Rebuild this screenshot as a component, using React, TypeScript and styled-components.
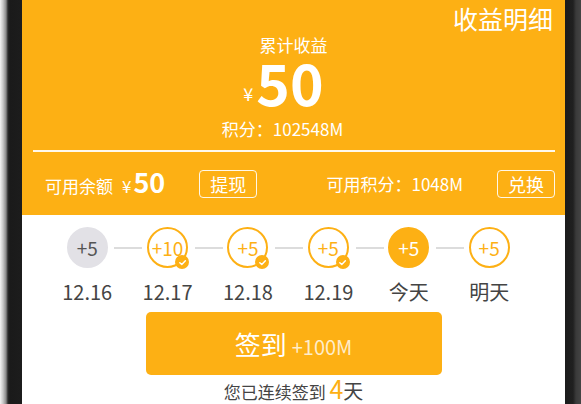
import styled, { createGlobalStyle } from "styled-components"

const ORANGE = "#fdb014"

const days = [
  { value: "+5", label: "12.16", kind: "missed" },
  { value: "+10", label: "12.17", kind: "done" },
  { value: "+5", label: "12.18", kind: "done" },
  { value: "+5", label: "12.19", kind: "done" },
  { value: "+5", label: "今天", kind: "today" },
  { value: "+5", label: "明天", kind: "next" },
] as const

type Kind = (typeof days)[number]["kind"]

const App = () => {
  return (
    <>
      <Global />
      <Frame>
        <LeftBezel />
        <Screen>
          <Header>
            <Title>收益明细</Title>
            <Summary>
              <SubLabel>累计收益</SubLabel>
              <Amount>
                <Yen>¥</Yen>
                <Big>50</Big>
              </Amount>
              <Points>积分：102548M</Points>
            </Summary>
            <Divider />
            <BalanceRow>
              <Group>
                <BalanceText>
                  可用余额<small>¥</small>
                  <strong>50</strong>
                </BalanceText>
                <OutlineButton>提现</OutlineButton>
              </Group>
              <Group>
                <BalanceText>可用积分：1048M</BalanceText>
                <OutlineButton>兑换</OutlineButton>
              </Group>
            </BalanceRow>
          </Header>
          <Body>
            <Steps>
              {days.map((d, i) => (
                <Step key={d.label} $first={i === 0}>
                  <Circle $kind={d.kind}>
                    {d.value}
                    {d.kind === "done" && (
                      <Badge>
                        <svg width="9" height="9" viewBox="0 0 10 10">
                          <polyline
                            points="2,5.2 4.2,7.3 8.2,3"
                            fill="none"
                            stroke="#fff"
                            strokeWidth="1.6"
                            strokeLinecap="round"
                            strokeLinejoin="round"
                          />
                        </svg>
                      </Badge>
                    )}
                  </Circle>
                  <DayLabel>{d.label}</DayLabel>
                </Step>
              ))}
            </Steps>
            <SignButton>
              签到<Bonus>+100M</Bonus>
            </SignButton>
            <Streak>
              您已连续签到 <Count>4</Count>
              <Unit>天</Unit>
            </Streak>
          </Body>
        </Screen>
        <RightBezel />
      </Frame>
    </>
  )
}

export default App

const Global = createGlobalStyle`
  html, body {
    margin: 0;
    padding: 0;
    background: #fff;
    overflow: hidden;
  }
  body {
    font-family: "Noto Sans CJK SC", "Noto Sans", sans-serif;
  }
`

const Frame = styled.div`
  display: flex;
  width: 581px;
  height: 404px;
  overflow: hidden;
`

const LeftBezel = styled.div`
  width: 22px;
  flex-shrink: 0;
  background: linear-gradient(
    to right,
    #f4f4f4 0px,
    #c8c8c8 3px,
    #8a8a8a 6px,
    #2a2a2a 8px,
    #1a1a1a 10px,
    #1c1c1c 22px
  );
`

const RightBezel = styled.div`
  width: 16px;
  flex-shrink: 0;
  background: linear-gradient(
    to right,
    #1b1b1b 0px,
    #202020 8px,
    #3a3a3a 11px,
    #444 16px
  );
`

const Screen = styled.div`
  flex: 1;
  display: flex;
  flex-direction: column;
  background: #fff;
`

const Header = styled.div`
  height: 215px;
  flex-shrink: 0;
  background: ${ORANGE};
  color: #fff;
  display: flex;
  flex-direction: column;
`

const Title = styled.div`
  align-self: flex-end;
  padding: 6px 12px 0 0;
  font-size: 25px;
  line-height: 25px;
`

const Summary = styled.div`
  display: flex;
  flex-direction: column;
  align-items: center;
  margin-top: 4px;
`

const SubLabel = styled.div`
  font-size: 17px;
  line-height: 20px;
`

const Amount = styled.div`
  line-height: 54px;
  height: 54px;
  margin-top: -1px;
  padding-right: 20px;
`

const Yen = styled.span`
  font-size: 18px;
  vertical-align: 5px;
  margin-right: 3px;
`

const Big = styled.span`
  font-size: 57px;
  font-weight: 700;
`

const Points = styled.div`
  font-size: 17px;
  line-height: 20px;
  margin-top: 11px;
  padding-right: 22px;
`

const Divider = styled.div`
  height: 2px;
  margin: 11px 10px 0 11px;
  background: rgba(255, 255, 255, 0.92);
`

const BalanceRow = styled.div`
  flex: 1;
  display: flex;
  align-items: center;
  justify-content: space-between;
  padding: 0 10px 0 23px;
`

const Group = styled.div`
  display: flex;
  align-items: center;
  gap: 34px;
`

const BalanceText = styled.div`
  font-size: 17px;
  line-height: 20px;

  small {
    font-size: 17px;
    margin: 0 2px 0 9px;
  }

  strong {
    font-size: 27px;
    font-weight: 700;
  }
`

const OutlineButton = styled.div`
  width: 58px;
  height: 28px;
  box-sizing: border-box;
  border: 1.5px solid rgba(255, 255, 255, 0.9);
  border-radius: 4px;
  display: flex;
  align-items: center;
  justify-content: center;
  font-size: 18px;
`

const Body = styled.div`
  flex: 1;
  display: flex;
  flex-direction: column;
`

const Steps = styled.div`
  display: flex;
  padding: 12px 0 0 25px;
`

const Step = styled.div<{ $first: boolean }>`
  position: relative;
  width: 80.4px;
  display: flex;
  flex-direction: column;
  align-items: center;

  &::before {
    content: "";
    display: ${(p) => (p.$first ? "none" : "block")};
    position: absolute;
    top: 19.5px;
    left: -13px;
    width: 28px;
    height: 2px;
    background: #dcdcdc;
  }
`

const Circle = styled.div<{ $kind: Kind }>`
  position: relative;
  width: 41px;
  height: 41px;
  box-sizing: border-box;
  border-radius: 50%;
  display: flex;
  align-items: center;
  justify-content: center;
  font-size: 19px;
  border: 2px solid
    ${(p) => (p.$kind === "missed" ? "#e2e1e6" : ORANGE)};
  background: ${(p) =>
    p.$kind === "missed" ? "#e2e1e6" : p.$kind === "today" ? ORANGE : "#fff"};
  color: ${(p) =>
    p.$kind === "missed" ? "#555" : p.$kind === "today" ? "#fff" : ORANGE};
`

const Badge = styled.span`
  position: absolute;
  right: -3px;
  bottom: -3px;
  width: 14px;
  height: 14px;
  border-radius: 50%;
  background: ${ORANGE};
  display: flex;
  align-items: center;
  justify-content: center;
`

const DayLabel = styled.div`
  margin-top: 12px;
  font-size: 20px;
  line-height: 24px;
  color: #444;
`

const SignButton = styled.div`
  width: 296px;
  height: 63px;
  flex-shrink: 0;
  margin: 8px auto 0;
  border-radius: 5px;
  background: ${ORANGE};
  color: #fff;
  display: flex;
  align-items: baseline;
  justify-content: center;
  line-height: 63px;
  font-size: 26px;
`

const Bonus = styled.span`
  margin-left: 5px;
  font-size: 20px;
  color: rgba(255, 255, 255, 0.78);
`

const Streak = styled.div`
  margin-top: 0;
  text-align: center;
  font-size: 17px;
  line-height: 26px;
  color: #444;
`

const Count = styled.span`
  font-size: 25px;
  line-height: 26px;
  color: ${ORANGE};
`

const Unit = styled.span`
  font-size: 20px;
  line-height: 26px;
`
